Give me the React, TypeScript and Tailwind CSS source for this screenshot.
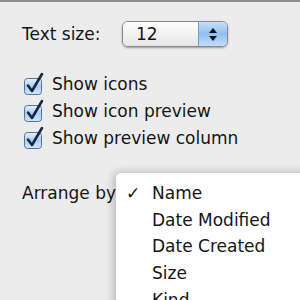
import React from "react";

function Checkbox() {
  return (
    <svg width="24" height="24" viewBox="0 0 24 24" className="shrink-0">
      <defs>
        <linearGradient id="cbg" x1="0" y1="0" x2="0" y2="1">
          <stop offset="0" stopColor="#e4f1fd" />
          <stop offset="0.5" stopColor="#a9cff4" />
          <stop offset="1" stopColor="#d2e9fc" />
        </linearGradient>
      </defs>
      <rect x="2.5" y="6.5" width="17" height="16" rx="3" fill="url(#cbg)" stroke="#56739b" strokeWidth="1" />
      <path d="M6 13.5 L10 19 L20 2" fill="none" stroke="#1b2740" strokeWidth="2.6" strokeLinecap="round" strokeLinejoin="round" />
    </svg>
  );
}

export default function App() {
  const font = { fontFamily: '"DejaVu Sans", Verdana, sans-serif' };
  return (
    <div
      className="relative w-[300px] h-[300px] overflow-hidden bg-[#ececec] border-t-2 border-[#8d8d8d] text-[17px] leading-[20px] text-[#151515]"
      style={font}
    >
      <div className="flex items-center pl-[22px] pt-[19px] h-[45px]">
        <span className="w-[100px]">Text size:</span>
        <div className="flex h-[26px] w-[106px] rounded-[6px] border border-[#8a8a8a] overflow-hidden shadow-[0_1px_2px_rgba(0,0,0,0.35)]">
          <div className="flex-1 flex items-center pl-[13px] bg-gradient-to-b from-[#ffffff] via-[#f2f2f2] to-[#e6e6e6]">
            12
          </div>
          <div className="w-[29px] flex flex-col items-center justify-center gap-[3px] border-l border-[#7a98c0] bg-gradient-to-b from-[#c8e0fa] via-[#8fbef0] to-[#c3def9]">
            <svg width="8" height="5" viewBox="0 0 8 5"><path d="M4 0 L8 5 L0 5 Z" fill="#111" /></svg>
            <svg width="8" height="5" viewBox="0 0 8 5"><path d="M0 0 L8 0 L4 5 Z" fill="#111" /></svg>
          </div>
        </div>
      </div>

      <div className="flex flex-col pl-[22px] pt-[23px]">
        <div className="flex items-center h-[27px] gap-[6px]">
          <Checkbox />
          <span>Show icons</span>
        </div>
        <div className="flex items-center h-[27px] gap-[6px]">
          <Checkbox />
          <span>Show icon preview</span>
        </div>
        <div className="flex items-center h-[27px] gap-[6px]">
          <Checkbox />
          <span>Show preview column</span>
        </div>
      </div>

      <div className="relative pl-[22px] pt-[32px]">
        <span>Arrange by</span>
        <div className="absolute left-[116px] top-[22px] w-[220px] h-[200px] bg-[#fefefe] rounded-tl-[5px] shadow-[-2px_0_10px_rgba(0,0,0,0.25)] pt-[6.5px]">
          {["Name", "Date Modified", "Date Created", "Size", "Kind"].map((t, i) => (
            <div key={t} className="flex items-center h-[26.7px]">
              <span className="w-[36px] pl-[10px] text-[17px] font-bold">{i === 0 ? "✓" : ""}</span>
              <span>{t}</span>
            </div>
          ))}
        </div>
      </div>
    </div>
  );
}
